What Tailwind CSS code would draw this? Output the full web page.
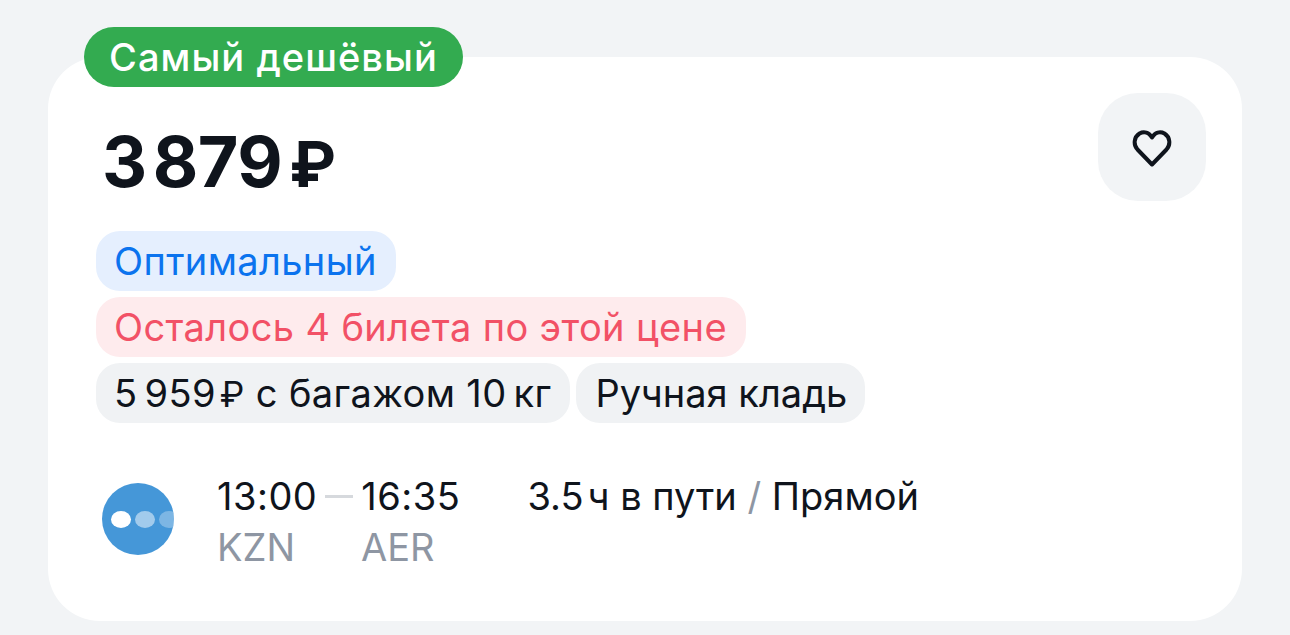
<!DOCTYPE html>
<html lang="ru">
<head>
<meta charset="utf-8">
<script src="https://cdn.jsdelivr.net/npm/@tailwindcss/browser@4"></script>
</head>
<body class="m-0 h-[635px] w-[1290px] overflow-hidden bg-[#f2f4f6] font-['Inter',sans-serif] antialiased">
<div class="pl-[48px] pt-[57px]">
  <div class="relative flex h-[564px] w-[1194px] flex-col rounded-[52px] bg-white px-[48px]">
    <div class="absolute left-[36px] top-[-30px] flex h-[60px] items-center rounded-[30px] bg-[#33ab50] px-[25px] text-[38px] font-medium tracking-[1.05px] text-white">Самый дешёвый</div>
    <button class="absolute right-[36px] top-[36px] flex size-[108px] items-center justify-center rounded-[40px] bg-[#f2f4f6]">
      <svg class="mt-[2px]" width="40" height="38" viewBox="0 0 40 38" fill="none" stroke="#0f141c" stroke-width="4" stroke-linejoin="round"><path d="M20 35.5 L5.5 20.5 C1 15.5 2 8 7.5 4.5 C12 2 17 3.5 20 8.5 C23 3.5 28 2 32.5 4.5 C38 8 39 15.5 34.5 20.5 Z"/></svg>
    </button>
    <div class="mt-[64px] ml-[6px] flex h-[80px] items-baseline text-[70px] leading-[82px] font-bold tracking-[-0.5px] text-[#0f141c]"><span>3</span><span class="ml-[6px]">879</span><span class="ml-[7px] text-[63px]">₽</span></div>
    <div class="mt-[30px] flex flex-col items-start gap-[6px] text-[38px] leading-[60px] tracking-[0.37px]">
      <div class="h-[60px] rounded-[24px] bg-[#e5effe] pr-[19px] pl-[18px] text-[#0b73ee]">Оптимальный</div>
      <div class="h-[60px] rounded-[24px] bg-[#feebed] pr-[19px] pl-[18px] text-[#f25166]">Осталось 4 билета по этой цене</div>
      <div class="flex gap-[6px] text-[#0f141c]">
        <div class="h-[60px] rounded-[24px] bg-[#f0f2f4] pr-[19px] pl-[18px]">5<span class="ml-[7px]">959</span><span class="ml-[4px] text-[35px]">₽</span> с багажом 10<span class="ml-[7px]">кг</span></div>
        <div class="h-[60px] rounded-[24px] bg-[#f0f2f4] pr-[18px] pl-[19px] tracking-[0px]">Ручная кладь</div>
      </div>
    </div>
    <div class="mt-[48px] flex items-start">
      <div class="mt-[12px] ml-[6px] flex size-[72px] items-center overflow-hidden rounded-full bg-[#4597d8] pl-[9px]">
        <span class="h-[17px] w-[20px] shrink-0 rounded-[50%] bg-white"></span>
        <span class="ml-[4px] h-[17px] w-[20px] shrink-0 rounded-[50%] bg-white/50"></span>
        <span class="ml-[4px] h-[17px] w-[20px] shrink-0 rounded-[50%] bg-white/30"></span>
      </div>
      <div class="ml-[43px] flex flex-col text-[38px] leading-[51px]">
        <div class="flex items-center tracking-[0.5px] text-[#0f141c]">
          <span>13:00</span>
          <span class="mx-[8px] h-[3px] w-[28px] bg-[#d6d9dd]"></span>
          <span>16:35</span>
        </div>
        <div class="flex text-[#8e96a3]">
          <span class="w-[144px]">KZN</span>
          <span>AER</span>
        </div>
      </div>
      <div class="ml-[67px] text-[38px] leading-[51px] text-[#0f141c]">3.5<span class="ml-[4px]">ч в пути</span> <span class="text-[#8e96a3]">/</span> Прямой</div>
    </div>
  </div>
</div>
</body>
</html>
